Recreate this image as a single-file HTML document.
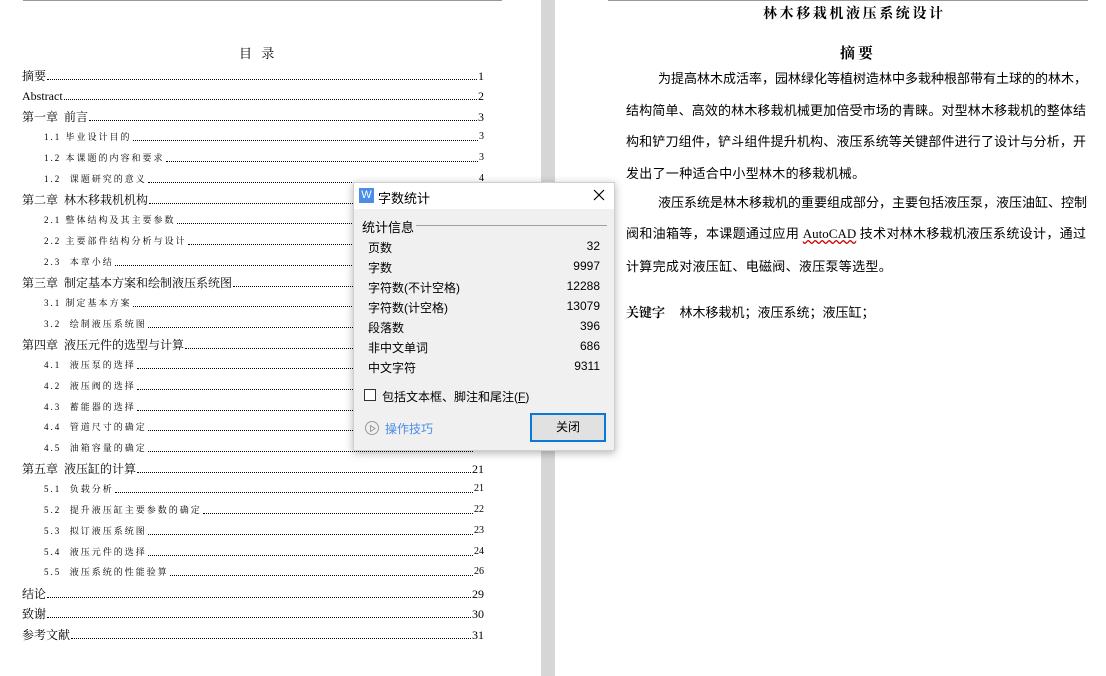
<!DOCTYPE html>
<html><head><meta charset="utf-8"><style>
*{margin:0;padding:0;box-sizing:border-box}
body{width:1106px;height:676px;overflow:hidden;background:#fff;position:relative;font-family:"Liberation Serif","Noto Serif CJK SC","Noto Sans CJK SC",serif;color:#000}
.gut{position:absolute;left:541px;top:0;width:14px;height:676px;background:#d6d6d6}
.hl{position:absolute;top:0;height:1px;background:#999}
.row{position:absolute;left:22px;width:462px;height:18px;display:flex;align-items:flex-end;font-size:12px;line-height:14px;white-space:nowrap}
.row.s{left:44px;width:440px;font-size:9px;letter-spacing:2px}
.row .d{flex:1;border-bottom:1px dotted #000;margin:0 1px 3px}
.row .p{font-size:12px;letter-spacing:0}
.row.s .p{font-size:10px}
.t{position:absolute;font-family:"Liberation Sans","Noto Sans CJK SC",sans-serif;font-size:14px;white-space:nowrap}
.j{position:absolute;font-family:"Liberation Serif","Noto Sans CJK SC",sans-serif;font-size:13px;white-space:nowrap;text-align:justify;text-align-last:justify;height:18px;line-height:18px}
.dlg{position:absolute;left:353px;top:182px;width:262px;height:269px;background:#f0f0f0;border:1px solid #d0d0d0;box-shadow:0 2px 8px rgba(0,0,0,.3);font-family:"Liberation Sans","Noto Sans CJK SC",sans-serif;font-size:12px;color:#000}
.dlg .tb{height:26px;background:#fff;position:relative}
.dlg .r{position:absolute;left:14px;width:232px;display:flex;justify-content:space-between}
</style></head><body>
<div class="hl" style="left:23px;width:479px"></div>
<div class="hl" style="left:608px;width:480px"></div>
<div class="gut"></div>
<div class="t" style="left:239px;top:43px;font-size:13px;letter-spacing:3px;font-family:'Noto Serif CJK SC',serif">目 录</div>

<div class="row" style="top:65px">摘要<span class="d"></span><span class="p">1</span></div>
<div class="row" style="top:85px">Abstract<span class="d"></span><span class="p">2</span></div>
<div class="row" style="top:106px">第一章&nbsp; 前言<span class="d"></span><span class="p">3</span></div>
<div class="row s" style="top:126px">1.1 毕业设计目的<span class="d"></span><span class="p">3</span></div>
<div class="row s" style="top:147px">1.2 本课题的内容和要求<span class="d"></span><span class="p">3</span></div>
<div class="row s" style="top:168px">1.2&nbsp; 课题研究的意义<span class="d"></span><span class="p">4</span></div>
<div class="row" style="top:189px">第二章&nbsp; 林木移栽机机构<span class="d"></span><span class="p">5</span></div>
<div class="row s" style="top:209px">2.1 整体结构及其主要参数<span class="d"></span><span class="p">5</span></div>
<div class="row s" style="top:230px">2.2 主要部件结构分析与设计<span class="d"></span><span class="p">6</span></div>
<div class="row s" style="top:251px">2.3&nbsp; 本章小结<span class="d"></span><span class="p">8</span></div>
<div class="row" style="top:272px">第三章&nbsp; 制定基本方案和绘制液压系统图<span class="d"></span><span class="p">9</span></div>
<div class="row s" style="top:292px">3.1 制定基本方案<span class="d"></span><span class="p">9</span></div>
<div class="row s" style="top:313px">3.2&nbsp; 绘制液压系统图<span class="d"></span><span class="p">10</span></div>
<div class="row" style="top:334px">第四章&nbsp; 液压元件的选型与计算<span class="d"></span><span class="p">12</span></div>
<div class="row s" style="top:354px">4.1&nbsp; 液压泵的选择<span class="d"></span><span class="p">12</span></div>
<div class="row s" style="top:375px">4.2&nbsp; 液压阀的选择<span class="d"></span><span class="p">14</span></div>
<div class="row s" style="top:396px">4.3&nbsp; 蓄能器的选择<span class="d"></span><span class="p">16</span></div>
<div class="row s" style="top:416px">4.4&nbsp; 管道尺寸的确定<span class="d"></span><span class="p">18</span></div>
<div class="row s" style="top:437px">4.5&nbsp; 油箱容量的确定<span class="d"></span><span class="p">20</span></div>
<div class="row" style="top:458px">第五章&nbsp; 液压缸的计算<span class="d"></span><span class="p">21</span></div>
<div class="row s" style="top:478px">5.1&nbsp; 负载分析<span class="d"></span><span class="p">21</span></div>
<div class="row s" style="top:499px">5.2&nbsp; 提升液压缸主要参数的确定<span class="d"></span><span class="p">22</span></div>
<div class="row s" style="top:520px">5.3&nbsp; 拟订液压系统图<span class="d"></span><span class="p">23</span></div>
<div class="row s" style="top:541px">5.4&nbsp; 液压元件的选择<span class="d"></span><span class="p">24</span></div>
<div class="row s" style="top:561px">5.5&nbsp; 液压系统的性能验算<span class="d"></span><span class="p">26</span></div>
<div class="row" style="top:583px">结论<span class="d"></span><span class="p">29</span></div>
<div class="row" style="top:603px">致谢<span class="d"></span><span class="p">30</span></div>
<div class="row" style="top:624px">参考文献<span class="d"></span><span class="p">31</span></div>

<div class="t" style="left:763px;top:3px;font-size:14px;font-weight:bold;letter-spacing:2.6px;font-family:'Noto Serif CJK SC',serif">林木移栽机液压系统设计</div>
<div class="t" style="left:840px;top:42px;font-size:15px;font-weight:bold;letter-spacing:3px;font-family:'Noto Serif CJK SC',serif">摘要</div>
<div class="j" style="left:658px;top:70px;width:426px">为提高林木成活率，园林绿化等植树造林中多栽种根部带有土球的的林木，</div>
<div class="j" style="left:626px;top:102px;width:460px">结构简单、高效的林木移栽机械更加倍受市场的青睐。对型林木移栽机的整体结</div>
<div class="j" style="left:626px;top:133px;width:460px">构和铲刀组件，铲斗组件提升机构、液压系统等关键部件进行了设计与分析，开</div>
<div class="t" style="left:626px;top:163px;font-size:13px;letter-spacing:0.3px">发出了一种适合中小型林木的移栽机械。</div>
<div class="j" style="left:658px;top:194px;width:428px">液压系统是林木移栽机的重要组成部分，主要包括液压泵，液压油缸、控制</div>
<div class="j" style="left:626px;top:225px;width:460px">阀和油箱等，本课题通过应用 <span style="text-decoration:underline wavy #c00">AutoCAD</span> 技术对林木移栽机液压系统设计，通过</div>
<div class="t" style="left:626px;top:256px;font-size:13px;letter-spacing:0.3px">计算完成对液压缸、电磁阀、液压泵等选型。</div>
<div class="t" style="left:626px;top:302px;font-size:13px"><b style="font-family:'Noto Serif CJK SC',serif">关键字</b>&nbsp;&nbsp;&nbsp; 林木移栽机；液压系统；液压缸；</div>

<div class="dlg">
 <div class="tb">
  <div style="position:absolute;left:5px;top:5px;width:15px;height:15px;background:#4a8ee8;color:#fff;font-size:11px;line-height:15px;text-align:center">W</div>
  <div style="position:absolute;left:24px;top:5px;font-size:13px">字数统计</div>
  <svg style="position:absolute;left:239px;top:6px" width="12" height="12"><path d="M1 1L11 11M11 1L1 11" stroke="#000" stroke-width="1.2"/></svg>
 </div>
 <div style="position:absolute;left:8px;top:34px;font-size:13px">统计信息</div>
 <div style="position:absolute;left:62px;top:42px;width:191px;height:1px;background:#a0a0a0"></div>
 <div class="r" style="top:56px"><span>页数</span><span>32</span></div>
 <div class="r" style="top:76px"><span>字数</span><span>9997</span></div>
 <div class="r" style="top:96px"><span>字符数(不计空格)</span><span>12288</span></div>
 <div class="r" style="top:116px"><span>字符数(计空格)</span><span>13079</span></div>
 <div class="r" style="top:136px"><span>段落数</span><span>396</span></div>
 <div class="r" style="top:156px"><span>非中文单词</span><span>686</span></div>
 <div class="r" style="top:176px"><span>中文字符</span><span>9311</span></div>
 <div style="position:absolute;left:10px;top:206px;width:12px;height:12px;border:1px solid #333;background:#fff"></div>
 <div style="position:absolute;left:28px;top:205px">包括文本框、脚注和尾注(<u>F</u>)</div>
 <div style="position:absolute;left:11px;top:238px;width:14px;height:14px;border:1px solid #999;border-radius:50%"></div>
 <svg style="position:absolute;left:16px;top:242px" width="6" height="7"><path d="M0.5 0.5L5 3.5L0.5 6.5Z" fill="none" stroke="#999"/></svg>
 <div style="position:absolute;left:31px;top:237px;color:#4a8ee8">操作技巧</div>
 <div style="position:absolute;left:176px;top:230px;width:76px;height:29px;border:2px solid #0a78d7;background:#e1e1e1;text-align:center;line-height:25px">关闭</div>
</div>
</body></html>
